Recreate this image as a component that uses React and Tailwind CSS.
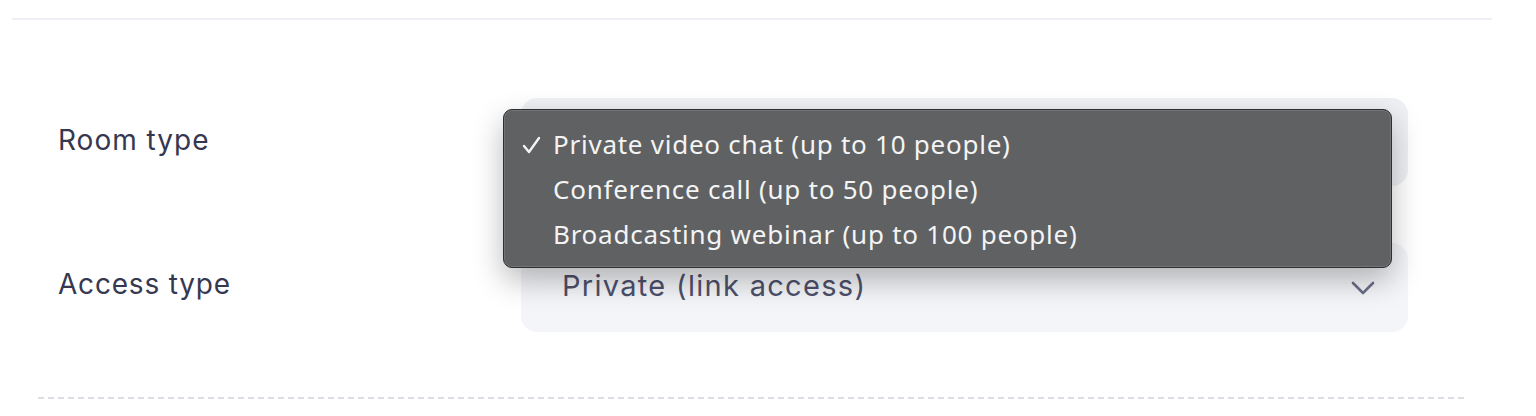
export default function App() {
  const labelFont = { fontFamily: 'Inter, "Noto Sans", sans-serif' };
  const menuFont = { fontFamily: '"Noto Sans", "Liberation Sans", Arial, sans-serif' };
  return (
    <div className="w-[1536px] h-[416px] bg-white overflow-hidden">
      <div className="ml-[12px] w-[1480px] pt-[18px]">
        <div className="h-[2px] bg-[#eeeef4]" />
      </div>
      <div className="pl-[58px] pt-[78px] flex flex-col gap-[57px]" style={labelFont}>
        <div className="flex items-center">
          <div className="w-[463px] mb-[4px] text-[28px] font-normal text-[#363850] tracking-[1px]">Room type</div>
          <div className="relative w-[887px] h-[88px] rounded-[16px] bg-[#eff0f4]">
            <div
              className="absolute left-[-18px] top-[11px] w-[889px] h-[159px] rounded-[9px] bg-[#5f6163] border border-[#2e2f30] shadow-[0_12px_30px_rgba(0,0,0,0.28),inset_0_0_0_1px_rgba(255,255,255,0.12)] py-[12px] z-10"
              style={menuFont}
            >
              <div className="flex items-center h-[45px] text-[26px] text-[#f4f4f4] tracking-[0.75px]">
                <span className="w-[49px] pl-[18px] flex items-center">
                  <svg width="19" height="18" viewBox="0 0 19 18" fill="none">
                    <polyline points="2,10 7,16 17,2" stroke="#f4f4f4" strokeWidth="2.4" strokeLinecap="round" strokeLinejoin="round" />
                  </svg>
                </span>
                <span>Private video chat (up to 10 people)</span>
              </div>
              <div className="flex items-center h-[45px] text-[26px] text-[#f4f4f4] tracking-[0.75px]">
                <span className="w-[49px]" />
                <span>Conference call (up to 50 people)</span>
              </div>
              <div className="flex items-center h-[45px] text-[26px] text-[#f4f4f4] tracking-[0.75px]">
                <span className="w-[49px]" />
                <span>Broadcasting webinar (up to 100 people)</span>
              </div>
            </div>
          </div>
        </div>
        <div className="flex items-center">
          <div className="w-[463px] mb-[7px] text-[28px] font-normal text-[#363850] tracking-[0.8px]">Access type</div>
          <div className="w-[887px] h-[89px] rounded-[16px] bg-[#f4f5f8] flex items-center justify-between pl-[41px] pr-[33px]">
            <span className="mb-[3px] text-[29px] text-[#4d506b] tracking-[1.3px]">Private (link access)</span>
            <svg width="24" height="14" viewBox="0 0 24 14" fill="none">
              <polyline points="2,2 12,12 22,2" stroke="#6b6e89" strokeWidth="2.6" strokeLinecap="round" strokeLinejoin="round" />
            </svg>
          </div>
        </div>
      </div>
      <div className="ml-[38px] w-[1428px] mt-[65px] h-[2px] bg-[repeating-linear-gradient(90deg,#dcdde5_0_6px,transparent_6px_10px)]" />
    </div>
  );
}
